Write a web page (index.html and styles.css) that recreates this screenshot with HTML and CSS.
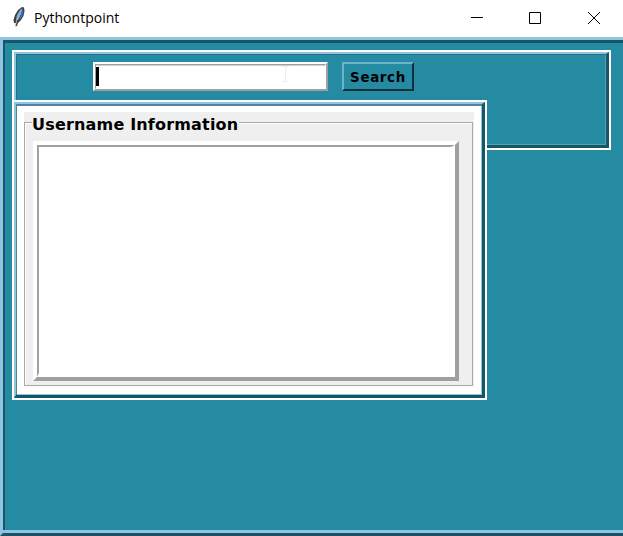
FILE: index.html
```html
<!DOCTYPE html>
<html lang="en">
<head>
<meta charset="utf-8">
<title>Pythontpoint</title>
<link rel="stylesheet" href="styles.css">
</head>
<body>
<header class="titlebar">
  <svg class="feather" width="14" height="22" viewBox="0 0 14 22">
    <path d="M2 17 L1.5 14 L3 9 L6 4 L10 1 L12 1.5 L12.5 5 L11.5 10 L9 14 L6 17 L5 20 L3.5 20.5 L4 17Z" fill="#3a3d44"/>
    <path d="M4 14 L5 9 L8 4 L10.5 2.2 L9 8 L6 14Z" fill="#86aedd"/>
    <path d="M7 14 L9 8 L11 3 L11.5 5 L10.5 10 L8.5 13Z" fill="#3f70b4"/>
    <path d="M3.5 19.5 L4.5 15 L7 10" fill="none" stroke="#c3beb5" stroke-width=".9"/>
  </svg>
  <span class="title">Pythontpoint</span>
  <svg class="controls" width="130" height="14" viewBox="0 0 130 14" fill="none" stroke="#000">
    <path d="M0 6.5H12M58.5 1.5H69.5V12.5H58.5ZM117 1L129 13M129 1L117 13"/>
  </svg>
</header>
<main class="window">
  <section class="frame search-frame">
    <div class="ridge search-row">
      <div class="entry"><div class="entry-inner"><span class="caret"></span>
        <svg class="ibeam" width="8" height="17" viewBox="0 0 8 17" fill="none" stroke="#ededed"><path d="M0 .5H3M4 .5H7M3.5 1V15M0 15.5H3M4 15.5H7"/></svg>
      </div></div>
      <button class="search">Search</button>
    </div>
  </section>
  <section class="frame info-frame">
    <div class="ridge info-body">
      <div class="group">
        <div class="group-line">
          <div class="group-title">Username Information</div>
          <div class="textbox"><div class="textbox-inner"></div></div>
        </div>
      </div>
    </div>
  </section>
</main>
</body>
</html>
```
FILE: styles.css
```css
* { box-sizing: border-box; }
body { margin: 0; width: 623px; height: 536px; overflow: hidden; background: #fff; }
.titlebar { height: 37px; display: flex; align-items: flex-start; background: #fff; }
.feather { margin: 6px 0 0 12px; }
.title { margin-left: 8px; width: 437px; font: 14px/20px "Open Sans", sans-serif; letter-spacing: .02px; margin-top: 8px; color: #000; }
.controls { margin-top: 11px; }
.window {
  height: 499px;
  background: #248ba3;
  border-style: solid;
  border-color: #8fc4e2 transparent #185666 #8fc4e2;
  border-width: 3px 0 3px 3px;
  box-shadow: inset 0 -3px #8fc4e2, inset 2px 3px #185666;
  padding: 9px 0 0 9px;
}
.frame { border: 2px solid #fff; }
.search-frame { width: 599px; height: 100px; margin-top: 1px; }
.ridge {
  height: 100%;
  border-style: solid;
  border-width: 2px 3px 3px 2px;
  border-color: #8fc4e2 #185666 #185666 #8fc4e2;
  box-shadow: inset 1px 1px #286f85, inset -1px -1px #55a0bb;
}
.search-row { display: flex; padding: 8px 0 0 77px; }
.entry {
  width: 235px; height: 29px;
  border: 2px solid;
  border-color: #fff #a0a0a0 #a0a0a0 #fff;
  background: #fff;
}
.entry-inner { height: 100%; border: 1px solid; border-color: #a0a0a0 #fff #fff #a0a0a0; box-shadow: inset 0 1px #d0d0d0; display: flex; padding: 2px 0 0; }
.caret { width: 3px; height: 19px; background: #000; }
.ibeam { margin: -1px 0 0 183px; }
.search {
  width: 72px; height: 29px; margin-left: 14px; padding: 2px 0 0;
  border: 2px solid; border-radius: 0;
  border-color: #6fb2cd #0e3039 #0e3039 #6fb2cd;
  background: #248ba3; color: #000;
  font: bold 13.33px/23px "DejaVu Sans", sans-serif; letter-spacing: .7px;
}
.info-frame { position: relative; width: 475px; height: 300px; margin-top: -50px; background: #fff; }
.info-body { padding: 8px 6px 7px 8px; box-shadow: inset 1px 2px #528398, inset -1px -1px #8fc4e2; }
.group { height: 274px; width: 450px; background: #efefef; padding: 10px 0 0; }
.group-line { width: 449px; height: 264px; border: 1px solid #a8a8a8; box-shadow: inset 1px 1px #fff; padding: 0 0 0 8px; }
.group-title { width: 207px; height: 18px; margin: -8px 0 0 -1px; background: #efefef; font: bold 16px/20px "DejaVu Sans", sans-serif; letter-spacing: .18px; white-space: nowrap; color: #000; }
.textbox {
  width: 426px; height: 240px; margin-top: 8px;
  border: 4px solid; border-color: #fff #a0a0a0 #a0a0a0 #fff; background: #fff;
}
.textbox-inner { height: 100%; border: solid; border-width: 2px 4px 4px 2px; border-color: #a0a0a0 #fff #fff #a0a0a0; }
```
